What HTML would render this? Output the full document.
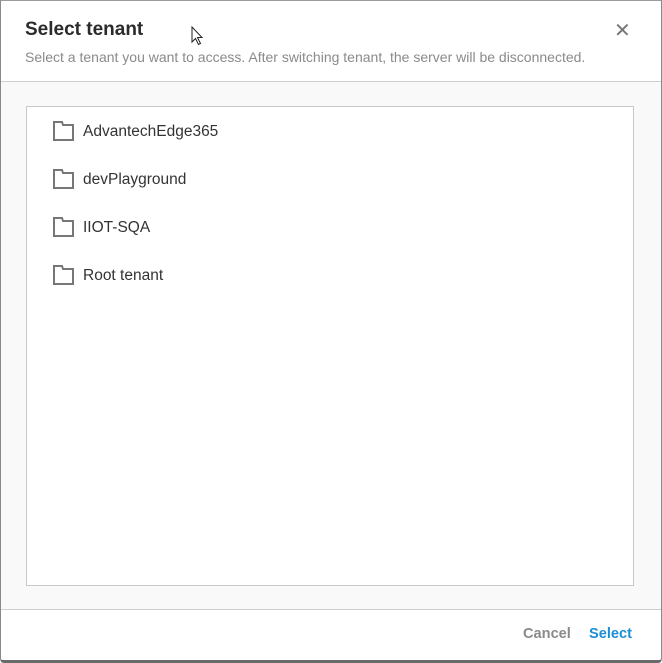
<!DOCTYPE html>
<html><head><style>
*{margin:0;padding:0;box-sizing:border-box}
body{width:662px;height:663px;background:#fff;font-family:"Liberation Sans",Roboto,sans-serif;position:relative;overflow:hidden}
.frame{position:absolute;left:0;top:0;width:662px;height:663px;border-left:1px solid #8a8a8a;border-right:1px solid #8a8a8a;border-top:1px solid #9a9a9a;border-bottom:3px solid #6a6a6a;border-radius:0 0 4px 4px}
.hdr{position:absolute;left:1px;top:1px;right:1px;height:81px;background:#fff;border-bottom:1px solid #cfcfcf}
h1{position:absolute;left:25px;top:19px;font-size:19px;font-weight:bold;color:#2b2b2b}
.sub{position:absolute;left:25px;top:49px;font-size:14px;color:#8a8a8a;white-space:nowrap}
.x{position:absolute;left:614px;top:18px;font-size:20px;color:#777}
.body{position:absolute;left:1px;top:82px;right:1px;height:528px;background:#f9f9f9;border-bottom:1px solid #cfcfcf}
.list{position:absolute;left:26px;top:106px;width:608px;height:480px;background:#fff;border:1px solid #c8c8c8}
.item{position:absolute;left:53px;height:20px;font-size:15.5px;color:#333}
.item svg{position:absolute;left:0;top:0}
.item span{position:absolute;left:30px;top:2px;white-space:nowrap}
.btn{position:absolute;top:626px;font-size:14.6px;font-weight:bold}
</style></head><body>
<div class="hdr"></div>
<h1>Select tenant</h1>
<div class="sub">Select a tenant you want to access. After switching tenant, the server will be disconnected.</div>
<div class="x">✕</div>
<div class="body"></div>
<div class="list"></div>
<div class="item" style="top:121px"><svg width="21" height="20"><path d="M1 19V1H9L10 4H20V19Z" fill="none" stroke="#777" stroke-width="2"/></svg><span>AdvantechEdge365</span></div>
<div class="item" style="top:169px"><svg width="21" height="20"><path d="M1 19V1H9L10 4H20V19Z" fill="none" stroke="#777" stroke-width="2"/></svg><span>devPlayground</span></div>
<div class="item" style="top:217px"><svg width="21" height="20"><path d="M1 19V1H9L10 4H20V19Z" fill="none" stroke="#777" stroke-width="2"/></svg><span>IIOT-SQA</span></div>
<div class="item" style="top:265px"><svg width="21" height="20"><path d="M1 19V1H9L10 4H20V19Z" fill="none" stroke="#777" stroke-width="2"/></svg><span>Root tenant</span></div>
<div class="btn" style="left:523px;color:#8a8a8a">Cancel</div>
<div class="btn" style="left:589px;color:#1a8fd8">Select</div>
<svg style="position:absolute;left:191px;top:26px" width="14" height="20"><path d="M1 1V16L4.5 12.5L7.5 18.5L9.5 17.5L6.5 11.5H11Z" fill="#fff" stroke="#222" stroke-width="1"/></svg>
<div class="frame"></div>
</body></html>
